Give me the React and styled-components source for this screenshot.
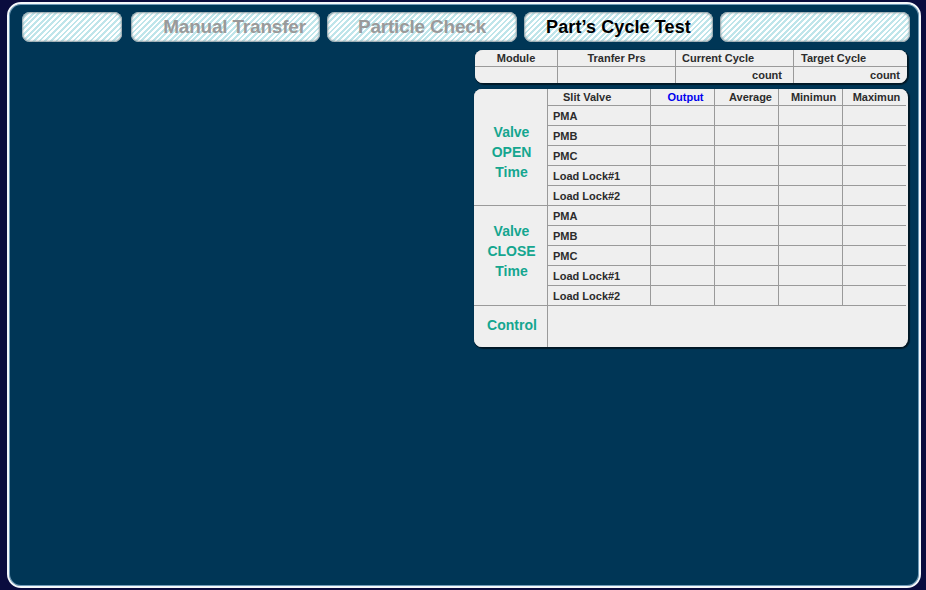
import { createGlobalStyle, styled } from "styled-components";

const GlobalStyle = createGlobalStyle`
  html, body {
    margin: 0;
    padding: 0;
    background: #0a0c3e;
    font-family: "Liberation Sans", Arial, sans-serif;
  }
`;

const Frame = styled.div`
  box-sizing: border-box;
  margin: 2px 5px 0 7px;
  height: 586px;
  border: 2px solid #f4f8fb;
  border-radius: 14px;
  background: #003656;
  box-shadow: inset 0 0 0 1px #6f9bb8;
  padding: 8px 9px 0 13px;
  display: flex;
  flex-direction: column;
  gap: 8px;
`;

const TabBar = styled.div`
  display: flex;
  gap: 7px;
  height: 30px;
`;

const Tab = styled.div`
  flex: 0 0 ${(p) => p.$w}px;
  margin-right: ${(p) => p.$gapAfter || 0}px;
  border-radius: 8px;
  background: repeating-linear-gradient(
    -45deg,
    #ffffff 0px,
    #ffffff 2px,
    #bfe5ea 2px,
    #bfe5ea 4px
  );
  box-shadow: inset 0 0 2px 1px #8a9aa0;
  display: flex;
  align-items: center;
  justify-content: center;
  padding-left: ${(p) => p.$shift || 0}px;
  box-sizing: border-box;
  font-weight: bold;
  font-size: ${(p) => (p.$active ? "18px" : "19px")};
  color: ${(p) => (p.$active ? "#000" : "#9a9a9a")};
  letter-spacing: ${(p) => (p.$active ? "0.1px" : "-0.2px")};
`;

const Content = styled.div`
  display: flex;
  flex-direction: column;
  align-items: flex-end;
  gap: 6px;
  padding-right: 2px;
`;

const Card = styled.div`
  background: #efefef;
  border-radius: 8px;
  overflow: hidden;
  box-shadow: 1px 1px 1px 1px rgba(0, 0, 0, 0.55);
  padding-right: ${(p) => p.$padRight || 0}px;
  margin-right: ${(p) => p.$marginRight || 0}px;
`;

const SummaryGrid = styled.div`
  display: grid;
  grid-template-columns: 82px 117px 117px 113px;
  grid-template-rows: 16px 16px;
  gap: 1px;
  background: #9a9a9a;
`;

const GridBody = styled.div`
  display: grid;
  grid-template-columns: 73px 102px 63px 63px 63px 63px;
  grid-template-rows: 16px repeat(10, 19px) 41px;
  gap: 1px;
  background: #9a9a9a;
`;

const Cell = styled.div`
  background: #efefef;
  display: flex;
  align-items: center;
  justify-content: ${(p) => p.$align || "flex-start"};
  padding: ${(p) => p.$pad || "0 5px"};
  font-size: 11px;
  font-weight: bold;
  color: ${(p) => p.$color || "#2c2c2c"};
  white-space: nowrap;
`;

const GroupLabel = styled.div`
  background: #efefef;
  display: flex;
  align-items: center;
  justify-content: center;
  text-align: center;
  font-size: 14px;
  line-height: 20px;
  font-weight: bold;
  color: #15a68f;
  grid-row: ${(p) => p.$rows};
  padding: ${(p) => p.$pad || "0 0 0 2px"};
`;

const Blank = styled.div`
  background: #efefef;
  grid-column: ${(p) => p.$cols || "auto"};
`;

const valves = ["PMA", "PMB", "PMC", "Load Lock#1", "Load Lock#2"];

const ValveRows = () =>
  valves.map((v) => (
    <>
      <Cell key={v}>{v}</Cell>
      <Blank />
      <Blank />
      <Blank />
      <Blank />
    </>
  ));

export default function App() {
  return (
    <>
      <GlobalStyle />
      <Frame>
        <TabBar>
          <Tab $w={100} $gapAfter={2} />
          <Tab $w={189} $shift={18}>Manual Transfer</Tab>
          <Tab $w={190}>Particle Check</Tab>
          <Tab $w={189} $active>Part’s Cycle Test</Tab>
          <Tab $w={190} />
        </TabBar>
        <Content>
          <Card $marginRight={1}>
            <SummaryGrid>
              <Cell $align="center">Module</Cell>
              <Cell $align="center">Tranfer Prs</Cell>
              <Cell $pad="0 6px">Current Cycle</Cell>
              <Cell $pad="0 7px">Target Cycle</Cell>
              <Blank />
              <Blank />
              <Cell $align="flex-end" $pad="0 11px">count</Cell>
              <Cell $align="flex-end" $pad="0 7px">count</Cell>
            </SummaryGrid>
          </Card>
          <Card $padRight={2}>
            <GridBody>
              <GroupLabel $rows="1 / span 6" $pad="9px 0 0 2px">
                Valve
                <br />
                OPEN
                <br />
                Time
              </GroupLabel>
              <Cell $pad="0 0 0 15px">Slit Valve</Cell>
              <Cell $align="center" $pad="0 0 0 6px" $color="#0000ee">
                Output
              </Cell>
              <Cell $align="center" $pad="0 0 0 8px">Average</Cell>
              <Cell $align="center" $pad="0 0 0 6px">Minimun</Cell>
              <Cell $align="center" $pad="0 0 0 4px">Maximun</Cell>
              <ValveRows />
              <GroupLabel $rows="7 / span 5" $pad="0 0 9px 2px">
                Valve
                <br />
                CLOSE
                <br />
                Time
              </GroupLabel>
              <ValveRows />
              <GroupLabel $rows="12" $pad="0 0 4px 3px">Control</GroupLabel>
              <Blank $cols="2 / span 5" />
            </GridBody>
          </Card>
        </Content>
      </Frame>
    </>
  );
}
